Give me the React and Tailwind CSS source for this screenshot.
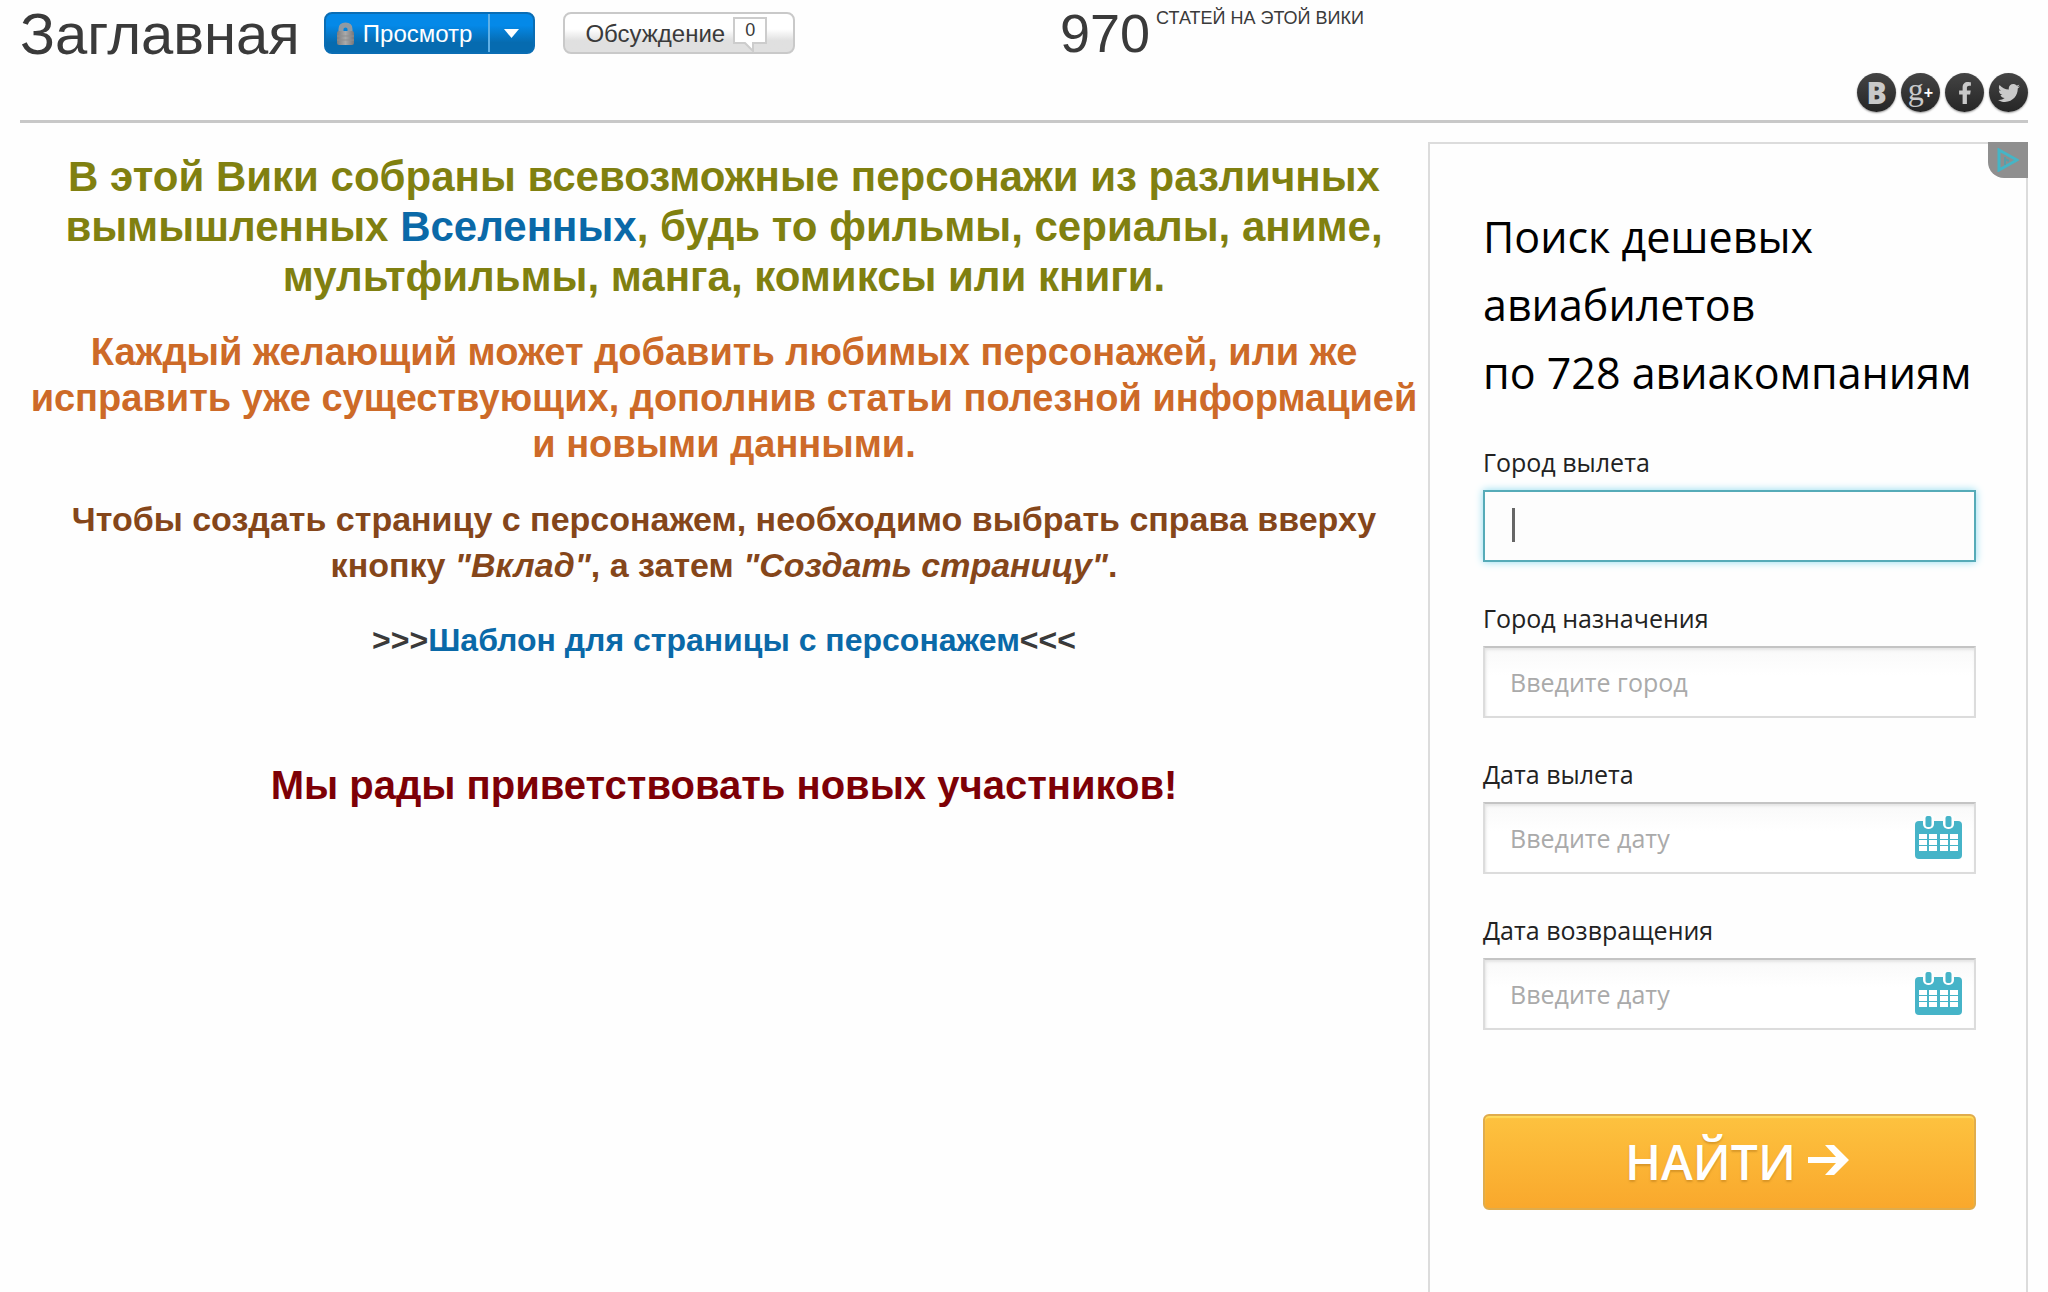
import { FaFacebookF, FaTwitter } from "react-icons/fa";

const socials = [
  { name: "ВКонтакте", icon: <span className="font-['Open_Sans',sans-serif] font-extrabold text-[30px]">В</span> },
  {
    name: "Google+",
    icon: (
      <span className="flex items-center font-['Liberation_Serif',serif] text-[32px]">
        <span className="-mt-2">g</span>
        <span className="font-['Liberation_Sans',sans-serif] font-bold text-[16px] text-white">+</span>
      </span>
    ),
  },
  { name: "Facebook", icon: <FaFacebookF size={22} /> },
  { name: "Twitter", icon: <FaTwitter size={22} /> },
];

function LockIcon() {
  return (
    <svg width="19" height="24" viewBox="0 0 19 24" aria-hidden="true">
      <defs>
        <linearGradient id="lock" x1="0" y1="0" x2="1" y2="0">
          <stop offset="0" stopColor="#7c7c7e" />
          <stop offset="0.5" stopColor="#aaa" />
          <stop offset="1" stopColor="#77777b" />
        </linearGradient>
      </defs>
      <path d="M5 12V7Q5 3 9.500 3T14 7v5" fill="none" stroke="#8f9aa3" strokeWidth="5" />
      <rect x="1" y="9" width="17" height="14" rx="2" fill="url(#lock)" />
      <path d="M1 14h17M1 18h17" stroke="#8f8f8f" strokeWidth="1" />
    </svg>
  );
}

function CalendarIcon() {
  return (
    <svg width="47" height="43" viewBox="0 0 47 43" aria-hidden="true">
      <rect x="0" y="5" width="47" height="38" rx="4" fill="#46b4c8" />
      <rect x="8" y="-3" width="11" height="16" rx="5" fill="#fff" />
      <rect x="28" y="-3" width="11" height="16" rx="5" fill="#fff" />
      <rect x="10.500" y="0" width="6" height="11" rx="2" fill="#46b4c8" />
      <rect x="30.500" y="0" width="6" height="11" rx="2" fill="#46b4c8" />
      {[18, 24, 30].map((y) =>
        [4, 14, 25, 35].map((x) => <rect key={`${x}-${y}`} x={x} y={y} width="8" height="5" fill="#fff" />)
      )}
    </svg>
  );
}

function Field({ id, label, placeholder, active, calendar }) {
  return (
    <div className="mb-[38px]">
      <label htmlFor={id} className="block h-[46px] leading-[36px] text-[25px] text-[#222]">
        {label}
      </label>
      <div className="relative">
        <input
          id={id}
          type="text"
          placeholder={placeholder}
          className={
            active
              ? "block w-full h-[72px] px-[25px] border-2 border-[#56abb8] bg-[#fdfdfd] text-[25px] shadow-[0_0_8px_#8fdcf0] outline-none"
              : "block w-full h-[72px] px-[25px] border-2 border-[#dcdcdc] border-t-[#c4c4c4] bg-linear-to-b from-[#f9f9f9] to-white to-40% text-[25px] placeholder-[#aaa] shadow-[inset_1px_2px_3px_#e4e4e4] outline-none"
          }
        />
        {active && <span className="absolute left-[29px] top-[18px] w-[3px] h-[34px] bg-[#666]" />}
        {calendar && (
          <button type="button" aria-label={label} className="absolute right-[14px] top-[14px]">
            <CalendarIcon />
          </button>
        )}
      </div>
    </div>
  );
}

function Header() {
  return (
    <header className="mx-5 h-[123px] border-b-3 border-[#c8c8c8] grid grid-cols-[1040fr_968fr] text-[#3a3a3a]">
      <div className="flex items-start">
        <h1 className="text-[58px] leading-[68px]">Заглавная</h1>

        <div className="mt-3 ml-6 flex h-[42px] rounded-lg border-2 border-[#0a6db4] bg-linear-to-b from-[#0489e8] from-30% to-[#066bb0] to-75% text-white text-[24px]">
          <button className="flex items-center gap-2 pl-[10px] pr-4 pt-[2px]">
            <LockIcon />
            Просмотр
          </button>
          <button aria-label="Ещё" className="w-[45px] flex justify-center items-center border-l-2 border-[#5fb0e6]">
            <svg width="15" height="9" viewBox="0 0 15 9">
              <path d="M0 0h15L7.500 9z" fill="#fff" />
            </svg>
          </button>
        </div>

        <button className="mt-3 ml-7 h-[42px] pl-5 pr-[26px] pt-[2px] flex items-center gap-2 rounded-lg border-2 border-[#c9c9c9] bg-linear-to-b from-white from-40% to-[#e0e0e0] to-70% text-[24px]">
          Обсуждение
          <span className="relative w-[34px] h-[27px] -mt-2 border-2 border-[#ccc] bg-white text-[18px] leading-[23px]">
            0
            <svg className="absolute left-[8px] top-[23px]" width="12" height="11" viewBox="0 0 12 11">
              <path d="M1 0L10 9V0" fill="#fff" stroke="#ccc" strokeWidth="2" />
            </svg>
          </span>
        </button>
      </div>

      <div className="flex justify-between">
        <div className="flex items-start gap-[6px]">
          <span className="text-[54px] leading-[66px]">970</span>
          <span className="mt-2 text-[18px] leading-5">СТАТЕЙ НА ЭТОЙ ВИКИ</span>
        </div>
        <div className="flex items-end gap-[5px] pb-2">
          {socials.map((s) => (
            <a
              key={s.name}
              href="#"
              aria-label={s.name}
              className="size-[39px] flex items-center justify-center rounded-full bg-linear-to-b from-[#444] to-[#262626] text-[#c9c9c9] leading-none shadow-[0_1px_2px_#999]"
            >
              {s.icon}
            </a>
          ))}
        </div>
      </div>
    </header>
  );
}

function Welcome() {
  return (
    <main className="flex-1 min-w-0 text-center font-bold">
      <p className="mt-[10px] text-[42px] leading-[50px] text-[#808010]">
        В этой Вики собраны всевозможные персонажи из различных
        <br />
        вымышленных <a href="#" className="text-[#0a69a8]">Вселенных</a>, будь то фильмы, сериалы, аниме,
        <br />
        мультфильмы, манга, комиксы или книги.
      </p>
      <p className="mt-[27px] text-[38px] leading-[46px] text-[#cd6a28]">
        Каждый желающий может добавить любимых персонажей, или же
        <br />
        исправить уже существующих, дополнив статьи полезной информацией
        <br />
        и новыми данными.
      </p>
      <p className="mt-[29px] text-[34px] leading-[46px] text-[#85461a]">
        Чтобы создать страницу с персонажем, необходимо выбрать справа вверху
        <br />
        кнопку <i>"Вклад"</i>, а затем <i>"Создать страницу"</i>.
      </p>
      <p className="mt-[29px] text-[32px] leading-[46px] text-[#3a3a3a]">
        &gt;&gt;&gt;<a href="#" className="text-[#0a69a8]">Шаблон для страницы с персонажем</a>&lt;&lt;&lt;
      </p>
      <p className="mt-[97px] text-[40px] leading-[50px] text-[#7d0006]">
        Мы рады приветствовать новых участников!
      </p>
    </main>
  );
}

function FlightSearch() {
  return (
    <aside className="relative w-[600px] shrink-0 border-2 border-b-0 border-[#dcdcdc] pl-[53px] pr-[50px] pt-[59px] font-['Open_Sans',sans-serif]">
      <a
        href="#"
        aria-label="AdChoices"
        className="absolute -top-[2px] -right-[2px] w-10 h-9 flex items-center justify-center rounded-bl-2xl bg-[#8f8f8f]"
      >
        <svg width="22" height="24" viewBox="0 0 22 24">
          <path d="M2 2L20 12L2 22z" fill="none" stroke="#45b5c6" strokeWidth="3" />
          <path d="M8 9v8M8 11l4 2" stroke="#5a9ea8" strokeWidth="2" />
        </svg>
      </a>

      <h2 className="text-[43px] leading-[68px] font-medium text-black whitespace-nowrap">
        Поиск дешевых
        <br />
        авиабилетов
        <br />
        по 728 авиакомпаниям
      </h2>

      <form className="mt-[37px]">
        <Field id="from" label="Город вылета" active />
        <Field id="to" label="Город назначения" placeholder="Введите город" />
        <Field id="depart" label="Дата вылета" placeholder="Введите дату" calendar />
        <Field id="return" label="Дата возвращения" placeholder="Введите дату" calendar />

        <button
          type="button"
          className="mt-[84px] w-full h-[96px] pl-4 flex items-center justify-center gap-3 rounded-md border-2 border-[#e0ac4c] bg-linear-to-b from-[#fdc23f] to-[#f9a82c] text-white text-[48px] leading-[90px] font-semibold text-shadow-[0_2px_2px_#b87a1a80] shadow-[inset_0_2px_1px_#ffdb5c]"
        >
          НАЙТИ
          <svg width="42" height="32" viewBox="0 0 42 32" className="-mt-1">
            <path d="M0 13H28L17 1H26L41 16L26 31H17L28 19H0z" fill="#fff" />
          </svg>
        </button>
      </form>
    </aside>
  );
}

export default function App() {
  return (
    <div className="min-h-screen flex flex-col bg-[#fefefe] font-['Liberation_Sans',Arial,sans-serif]">
      <Header />
      <div className="flex-1 mx-5 pt-[19px] flex">
        <Welcome />
        <FlightSearch />
      </div>
    </div>
  );
}
